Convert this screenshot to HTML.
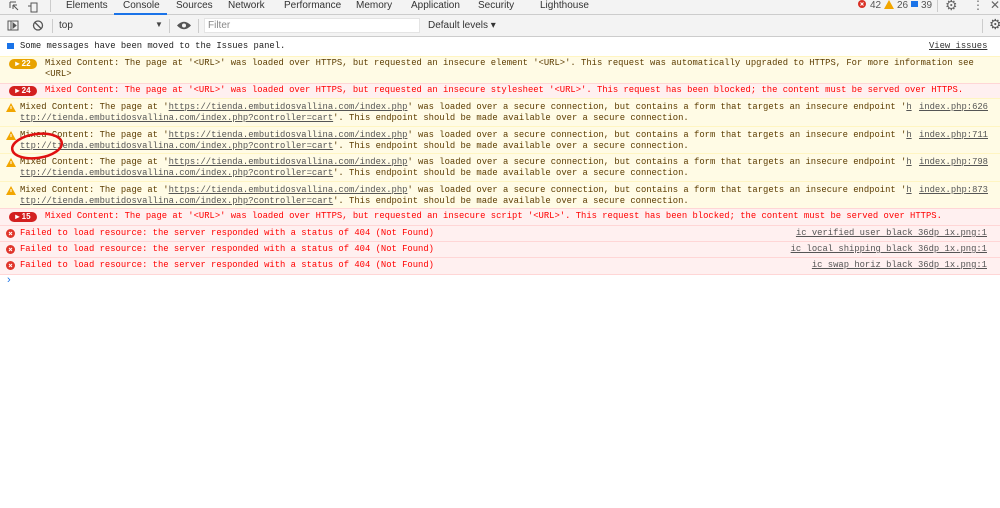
<!DOCTYPE html>
<html><head><meta charset="utf-8"><style>
body{margin:0;width:1000px;height:508px;background:#fff;position:relative;overflow:hidden;font-family:"Liberation Sans",sans-serif;}
.a{position:absolute;white-space:pre;}
.m{font-family:"Liberation Mono",monospace;font-size:8.85px;line-height:11px;}
.tab{position:absolute;top:0;font-size:10px;color:#333;line-height:12px;}
.row{position:absolute;left:0;width:1000px;}
.w{background:#fffbe5;border-top:1px solid #fff5c2;color:#5c3c00;}
.e{background:#fff0f0;border-top:1px solid #ffd6d6;color:#f00;}
u{text-decoration:underline;color:#555;}
.e u{color:#333}
.badge{position:absolute;left:9px;width:28px;height:10px;border-radius:5px;color:#fff;font-family:"Liberation Sans",sans-serif;font-size:8px;line-height:10px;font-weight:bold;text-align:center;}
</style></head><body>
<div class="a" style="left:0;top:0;width:1000px;height:14px;background:#f3f3f3;border-bottom:1px solid #ccc"></div>
<svg class="a" style="left:8px;top:1px" width="30" height="12"><path d="M2 1h6M2 1v6M5 4l5 5M5 4h4M5 4v4" stroke="#555" fill="none"/><rect x="23" y="2" width="6" height="9" stroke="#555" fill="none"/><path d="M20 5h3" stroke="#555"/></svg>
<div class="a" style="left:50px;top:0;width:1px;height:12px;background:#ccc"></div>
<span class="tab" style="left:66px">Elements</span>
<span class="tab" style="left:123px">Console</span>
<div class="a" style="left:114px;top:13px;width:53px;height:2px;background:#1a73e8"></div>
<span class="tab" style="left:176px">Sources</span>
<span class="tab" style="left:228px">Network</span>
<span class="tab" style="left:284px">Performance</span>
<span class="tab" style="left:356px">Memory</span>
<span class="tab" style="left:411px">Application</span>
<span class="tab" style="left:478px">Security</span>
<span class="tab" style="left:540px">Lighthouse</span>
<svg class="a" style="left:858px;top:0" width="8" height="8"><circle cx="4" cy="4" r="4" fill="#d93025"/><path d="M2.5 2.5l3 3M5.5 2.5l-3 3" stroke="#fff"/></svg>
<span class="tab" style="left:870px;color:#555">42</span>
<svg class="a" style="left:884px;top:0" width="10" height="9"><path d="M5 0L10 9H0z" fill="#f2a600"/></svg>
<span class="tab" style="left:897px;color:#555">26</span>
<div class="a" style="left:911px;top:1px;width:7px;height:6px;background:#1a73e8"></div>
<span class="tab" style="left:921px;color:#555">39</span>
<div class="a" style="left:937px;top:0;width:1px;height:12px;background:#ccc"></div>
<span class="a" style="left:945px;top:-3px;font-size:14px;color:#666">⚙</span>
<span class="a" style="left:972px;top:-2px;font-size:12px;color:#666">⋮</span>
<span class="a" style="left:990px;top:-2px;font-size:12px;color:#666">✕</span>

<div class="a" style="left:0;top:15px;width:1000px;height:21px;background:#f3f3f3;border-bottom:1px solid #ccc"></div>
<svg class="a" style="left:7px;top:20px" width="40" height="12"><rect x="1" y="1" width="10" height="9" stroke="#555" fill="none"/><path d="M4 1v9M6 3l3 2.5-3 2.5z" stroke="#555" fill="#555"/><circle cx="31" cy="5.5" r="4.5" stroke="#555" fill="none" stroke-width="1.3"/><path d="M28 2.5l6 6" stroke="#555" stroke-width="1.3"/></svg>
<div class="a" style="left:52px;top:19px;width:1px;height:14px;background:#ccc"></div>
<span class="a" style="left:59px;top:20px;font-size:10px;color:#333">top</span>
<span class="a" style="left:155px;top:20px;font-size:8px;color:#444">▼</span>
<div class="a" style="left:169px;top:19px;width:1px;height:14px;background:#ccc"></div>
<svg class="a" style="left:177px;top:21px" width="14" height="9"><path d="M0 4.5Q7 -3 14 4.5Q7 12 0 4.5z" fill="#555"/><circle cx="7" cy="4.5" r="2" fill="#f3f3f3"/></svg>
<div class="a" style="left:198px;top:19px;width:1px;height:14px;background:#ccc"></div>
<div class="a" style="left:204px;top:18px;width:216px;height:15px;background:#fff;border:1px solid #e4e4e4;box-sizing:border-box"></div>
<span class="a" style="left:208px;top:20px;font-size:10px;color:#888">Filter</span>
<span class="a" style="left:428px;top:20px;font-size:10px;color:#333">Default levels ▾</span>
<div class="a" style="left:982px;top:19px;width:1px;height:14px;background:#ccc"></div>
<span class="a" style="left:989px;top:16px;font-size:14px;color:#555">⚙</span>

<div class="a m" style="left:0;top:41px;width:1000px">
</div>
<div class="a" style="left:7px;top:43px;width:7px;height:6px;background:#1a73e8"></div>
<span class="a m" style="left:20px;top:41px;color:#222">Some messages have been moved to the Issues panel.</span>
<span class="a m" style="left:929px;top:41px"><u style="color:#333">View issues</u></span>

<div class="row w m" style="top:56px;height:27px"></div>
<div class="badge" style="top:59px;background:#e8a200">▸ 22</div>
<span class="a m" style="left:45px;top:58px;color:#5c3c00">Mixed Content: The page at '&lt;URL&gt;' was loaded over HTTPS, but requested an insecure element '&lt;URL&gt;'. This request was automatically upgraded to HTTPS, For more information see
&lt;URL&gt;</span>

<div class="row e" style="top:83px;height:15px"></div>
<div class="badge" style="top:86px;background:#d32020">▸ 24</div>
<span class="a m" style="left:45px;top:85px;color:#f00">Mixed Content: The page at '&lt;URL&gt;' was loaded over HTTPS, but requested an insecure stylesheet '&lt;URL&gt;'. This request has been blocked; the content must be served over HTTPS.</span>

<div class="row w" style="top:98px;height:28px"></div>
<div class="row w" style="top:126px;height:27px"></div>
<div class="row w" style="top:153px;height:28px"></div>
<div class="row w" style="top:181px;height:27px"></div>

<svg class="a" style="left:6px;top:103px" width="10" height="9"><path d="M5 0L10 9H0z" fill="#f2a600"/><path d="M5 3v3" stroke="#fff"/></svg>
<svg class="a" style="left:6px;top:131px" width="10" height="9"><path d="M5 0L10 9H0z" fill="#f2a600"/><path d="M5 3v3" stroke="#fff"/></svg>
<svg class="a" style="left:6px;top:158px" width="10" height="9"><path d="M5 0L10 9H0z" fill="#f2a600"/><path d="M5 3v3" stroke="#fff"/></svg>
<svg class="a" style="left:6px;top:186px" width="10" height="9"><path d="M5 0L10 9H0z" fill="#f2a600"/><path d="M5 3v3" stroke="#fff"/></svg>

<span class="a m" style="left:20px;top:102px;color:#5c3c00">Mixed Content: The page at '<u>https://tienda.embutidosvallina.com/index.php</u>' was loaded over a secure connection, but contains a form that targets an insecure endpoint '<u>h</u>
<u>ttp://tienda.embutidosvallina.com/index.php?controller=cart</u>'. This endpoint should be made available over a secure connection.</span>
<span class="a m" style="left:919px;top:102px"><u>index.php:626</u></span>
<span class="a m" style="left:20px;top:130px;color:#5c3c00">Mixed Content: The page at '<u>https://tienda.embutidosvallina.com/index.php</u>' was loaded over a secure connection, but contains a form that targets an insecure endpoint '<u>h</u>
<u>ttp://tienda.embutidosvallina.com/index.php?controller=cart</u>'. This endpoint should be made available over a secure connection.</span>
<span class="a m" style="left:919px;top:130px"><u>index.php:711</u></span>
<span class="a m" style="left:20px;top:157px;color:#5c3c00">Mixed Content: The page at '<u>https://tienda.embutidosvallina.com/index.php</u>' was loaded over a secure connection, but contains a form that targets an insecure endpoint '<u>h</u>
<u>ttp://tienda.embutidosvallina.com/index.php?controller=cart</u>'. This endpoint should be made available over a secure connection.</span>
<span class="a m" style="left:919px;top:157px"><u>index.php:798</u></span>
<span class="a m" style="left:20px;top:185px;color:#5c3c00">Mixed Content: The page at '<u>https://tienda.embutidosvallina.com/index.php</u>' was loaded over a secure connection, but contains a form that targets an insecure endpoint '<u>h</u>
<u>ttp://tienda.embutidosvallina.com/index.php?controller=cart</u>'. This endpoint should be made available over a secure connection.</span>
<span class="a m" style="left:919px;top:185px"><u>index.php:873</u></span>

<div class="row e" style="top:208px;height:17px"></div>
<div class="badge" style="top:212px;background:#d32020">▸ 15</div>
<span class="a m" style="left:45px;top:211px;color:#f00">Mixed Content: The page at '&lt;URL&gt;' was loaded over HTTPS, but requested an insecure script '&lt;URL&gt;'. This request has been blocked; the content must be served over HTTPS.</span>

<div class="row e" style="top:225px;height:16px"></div>
<div class="row e" style="top:241px;height:16px"></div>
<div class="row e" style="top:257px;height:16px;border-bottom:1px solid #ffd6d6"></div>
<svg class="a" style="left:6px;top:229px" width="9" height="9"><circle cx="4.5" cy="4.5" r="4.5" fill="#e0362c"/><path d="M3 3l3 3M6 3l-3 3" stroke="#fff"/></svg>
<svg class="a" style="left:6px;top:245px" width="9" height="9"><circle cx="4.5" cy="4.5" r="4.5" fill="#e0362c"/><path d="M3 3l3 3M6 3l-3 3" stroke="#fff"/></svg>
<svg class="a" style="left:6px;top:261px" width="9" height="9"><circle cx="4.5" cy="4.5" r="4.5" fill="#e0362c"/><path d="M3 3l3 3M6 3l-3 3" stroke="#fff"/></svg>
<span class="a m" style="left:20px;top:228px;color:#f00">Failed to load resource: the server responded with a status of 404 (Not Found)</span>
<span class="a m" style="left:20px;top:244px;color:#f00">Failed to load resource: the server responded with a status of 404 (Not Found)</span>
<span class="a m" style="left:20px;top:260px;color:#f00">Failed to load resource: the server responded with a status of 404 (Not Found)</span>
<span class="a m" style="right:13px;top:228px"><u>ic verified user black 36dp 1x.png:1</u></span>
<span class="a m" style="right:13px;top:244px"><u>ic local shipping black 36dp 1x.png:1</u></span>
<span class="a m" style="right:13px;top:260px"><u>ic swap horiz black 36dp 1x.png:1</u></span>

<span class="a" style="left:7px;top:274px;font-size:11px;color:#1a73e8">›</span>

<svg class="a" style="left:8px;top:130px" width="60" height="34"><ellipse cx="29" cy="16" rx="25" ry="12" fill="none" stroke="#e01010" stroke-width="2.5" transform="rotate(-8 29 16)"/></svg>
</body></html>
